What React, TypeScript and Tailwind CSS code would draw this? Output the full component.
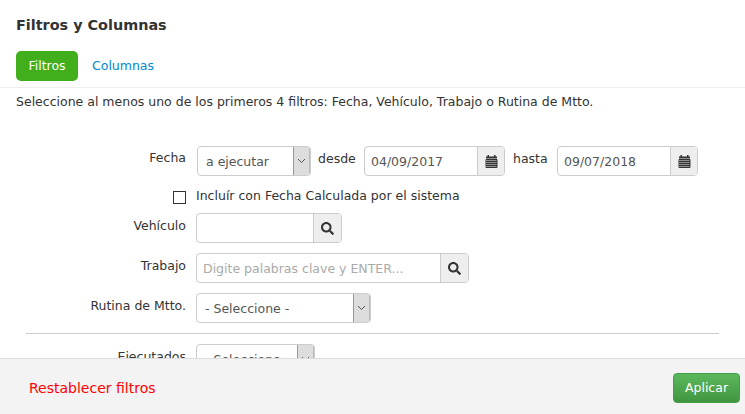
import React from "react";
import { FaSearch } from "react-icons/fa";

const labelClass = "w-[186px] shrink-0 pt-[3px] text-right leading-[20px]";

const CalendarIcon = () => (
  <svg width="13" height="13" viewBox="0 0 13 13" fill="#333">
    <rect x="2.5" y="0" width="1.5" height="2" />
    <rect x="9" y="0" width="1.5" height="2" />
    <rect x="1" y="1.5" width="11" height="2" />
    <path d="M1 4.5h11v8H1z" fill="none" stroke="#333" strokeWidth="1" />
    <path d="M1 6.5h11M1 8.5h11M1 10.5h11M3 4.5v8M5 4.5v8M7 4.5v8M9 4.5v8M11 4.5v8" stroke="#333" strokeWidth="1" />
  </svg>
);

const SelectBox = ({ text, width }: { text: string; width: string }) => (
  <div className={`flex h-[30px] ${width} shrink-0 overflow-hidden rounded-[4px] border border-[#ccc] bg-white`}>
    <span className="flex-1 pl-[8px] leading-[30px] text-[#555]">{text}</span>
    <span className="flex w-[17px] items-center justify-center border border-y-0 border-l-[#999] border-r-[#bbb] bg-[#ddd]">
      <svg width="9" height="6" viewBox="0 0 9 6" fill="none" stroke="#555" strokeWidth="1">
        <path d="M1 1l3.5 3.5L8 1" />
      </svg>
    </span>
  </div>
);

const DateInput = ({ value }: { value: string }) => (
  <div className="flex h-[30px] w-[141px] shrink-0 overflow-hidden rounded-[4px] border border-[#ccc] bg-white">
    <span className="flex-1 pl-[6px] leading-[30px] text-[#555]">{value}</span>
    <span className="flex w-[27px] items-center justify-center border-l border-[#ccc] bg-[#eee]">
      <CalendarIcon />
    </span>
  </div>
);

const SearchInput = ({ placeholder, width }: { placeholder?: string; width: string }) => (
  <div className={`flex h-[30px] ${width} overflow-hidden rounded-[4px] border border-[#ccc] bg-white`}>
    <span className="flex-1 pl-[6px] leading-[30px] text-[#aaa]">{placeholder}</span>
    <span className="flex w-[28px] items-center justify-center border-l border-[#ccc] bg-[#eee]">
      <FaSearch className="text-[13px] text-[#333]" />
    </span>
  </div>
);

export default function App() {
  return (
    <div className="flex h-[414px] w-[745px] flex-col overflow-hidden bg-white font-['DejaVu_Sans',Verdana,sans-serif] text-[12.5px] text-[#333]">
      <h1 className="px-[16px] pt-[15px] text-[14.4px] font-bold leading-[20px]">Filtros y Columnas</h1>

      <div className="mt-[16px] flex h-[37px] items-start gap-[14px] border-b border-[#eee] px-[16px]">
        <span className="h-[30px] w-[62px] rounded-[5px] bg-[#41AE1B] text-center leading-[30px] text-white">Filtros</span>
        <span className="leading-[30px] text-[#0088cc]">Columnas</span>
      </div>

      <div className="flex-1 overflow-hidden">
        <p className="px-[16px] pt-[6px] leading-[16px]">
          Seleccione al menos uno de los primeros 4 filtros: Fecha, Vehículo, Trabajo o Rutina de Mtto.
        </p>

        <div className="mt-[36px] flex h-[30px] items-start">
          <span className="w-[186px] shrink-0 pt-[2px] text-right leading-[20px]">Fecha</span>
          <div className="ml-[11px] flex items-start">
            <SelectBox text="a ejecutar" width="w-[114px]" />
            <span className="ml-[7px] w-[46px] leading-[26px]">desde</span>
            <DateInput value="04/09/2017" />
            <span className="ml-[8px] w-[44px] leading-[26px]">hasta</span>
            <DateInput value="09/07/2018" />
          </div>
        </div>

        <div className="mt-[14px] flex h-[14px] items-center pl-[173px]">
          <span className="h-[13px] w-[13px] border border-[#333] bg-white" />
          <span className="ml-[10px] pb-[2px]">Incluír con Fecha Calculada por el sistema</span>
        </div>

        <div className="mt-[9px] flex items-start">
          <span className={labelClass}>Vehículo</span>
          <div className="ml-[10px]">
            <SearchInput width="w-[146px]" />
          </div>
        </div>

        <div className="mt-[10px] flex items-start">
          <span className={labelClass}>Trabajo</span>
          <div className="ml-[10px]">
            <SearchInput placeholder="Digite palabras clave y ENTER..." width="w-[273px]" />
          </div>
        </div>

        <div className="mt-[10px] flex items-start">
          <span className={labelClass}>Rutina de Mtto.</span>
          <div className="ml-[10px]">
            <SelectBox text="- Seleccione -" width="w-[175px]" />
          </div>
        </div>

        <hr className="mx-[26px] mt-[10px] border-t border-[#ccc]" />

        <div className="mt-[10px] flex items-start">
          <span className={labelClass}>Ejecutados</span>
          <div className="ml-[10px]">
            <SelectBox text="- Seleccione -" width="w-[119px]" />
          </div>
        </div>
      </div>

      <div className="flex h-[56px] shrink-0 items-center justify-between border-t border-[#ddd] bg-[#f3f3f3] pl-[29px] pr-[5px]">
        <span className="mt-[3px] text-[14px] text-[#ff0000]">Restablecer filtros</span>
        <span className="mt-[3px] h-[30px] w-[67px] rounded-[4px] border border-[#449d44] bg-gradient-to-b from-[#5cb85c] to-[#419641] text-center leading-[28px] text-white">
          Aplicar
        </span>
      </div>
    </div>
  );
}
